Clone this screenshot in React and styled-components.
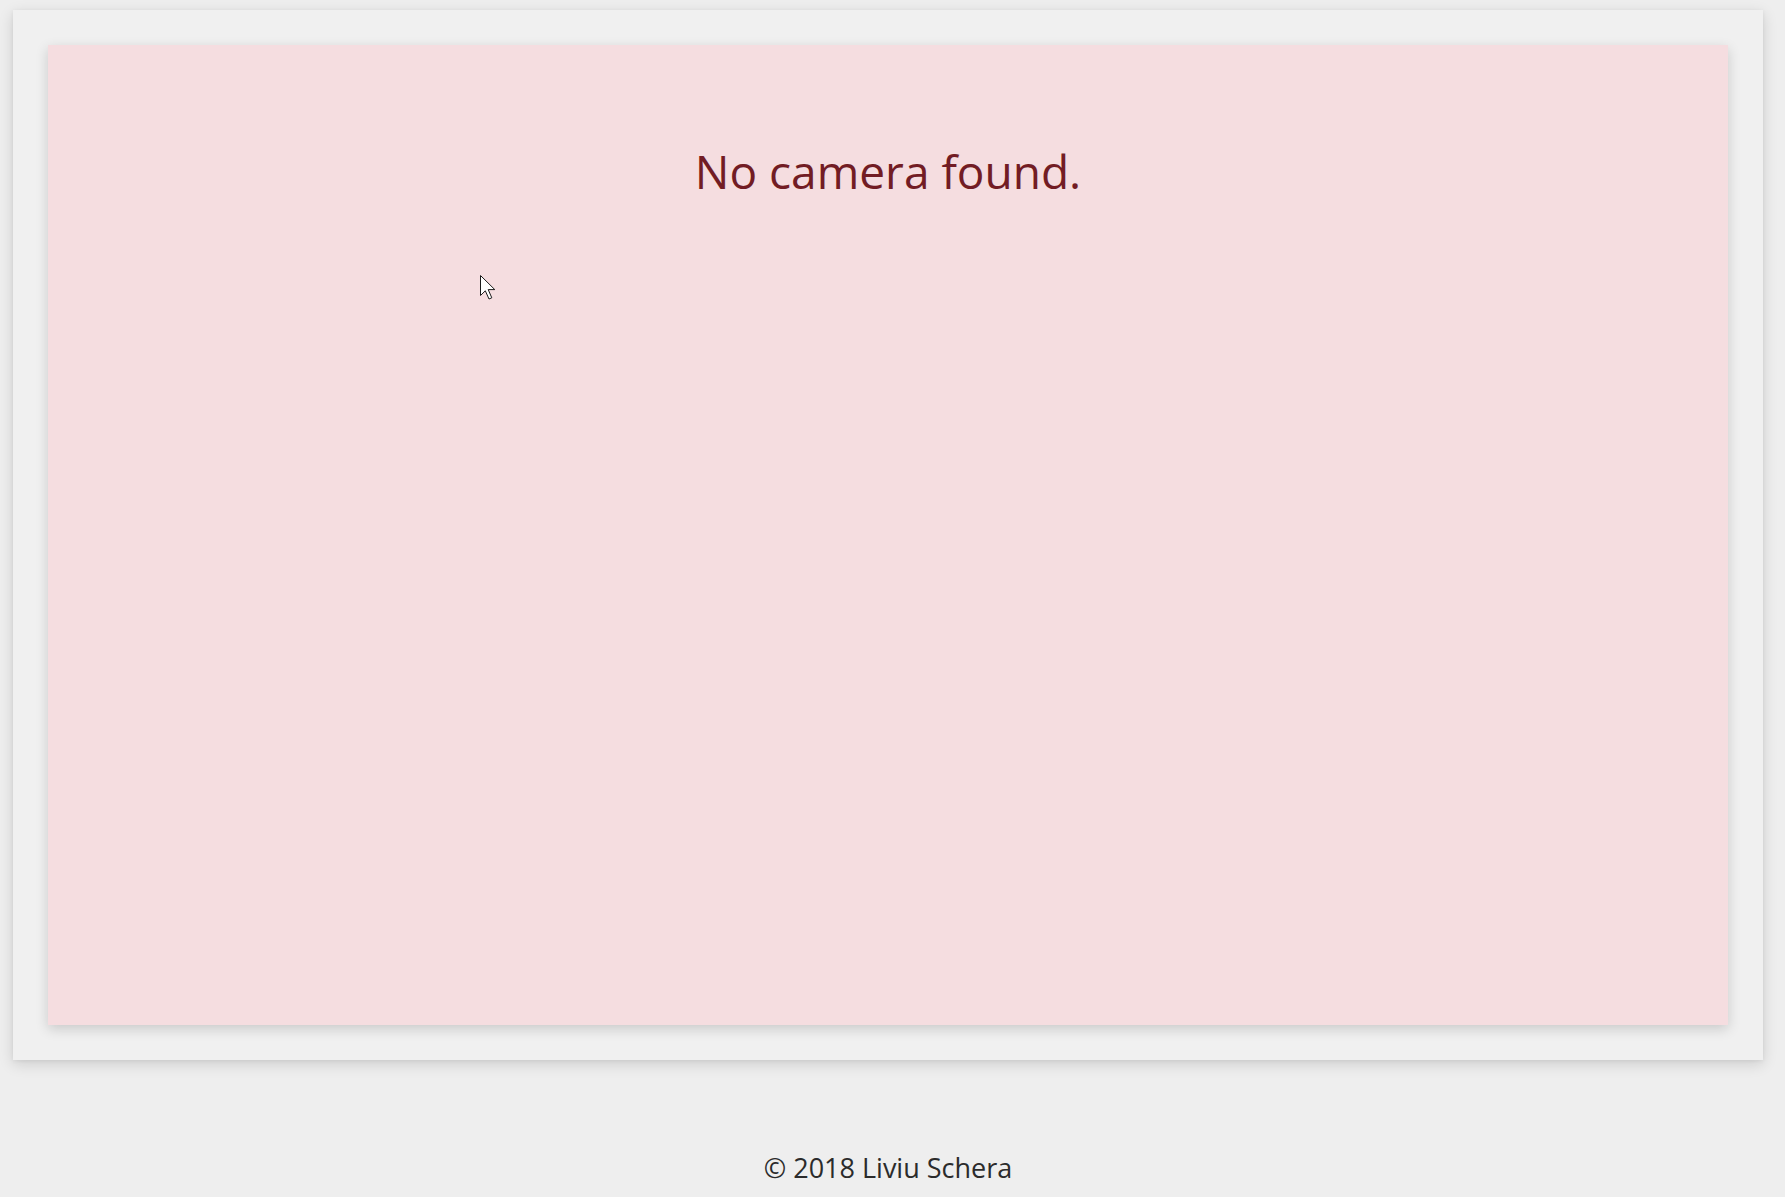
import React from "react";
import styled, { createGlobalStyle } from "styled-components";

const GlobalStyle = createGlobalStyle`
  html, body {
    margin: 0;
    padding: 0;
    background: #eeeeee;
    font-family: "Open Sans", "Noto Sans", sans-serif;
    overflow: hidden;
  }
`;

const Page = styled.div`
  position: relative;
  height: 1197px;
  padding: 10px 22px 0 13px;
  box-sizing: border-box;
`;

const Card = styled.div`
  background: #f0f0f0;
  padding: 35px;
  box-shadow: 0 4px 14px rgba(0, 0, 0, 0.14), 0 1px 4px rgba(0, 0, 0, 0.06);
`;

const Alert = styled.div`
  background: #f5dde0;
  height: 980px;
  box-sizing: border-box;
  padding-top: 103px;
  text-align: center;
  box-shadow: 0 4px 12px rgba(0, 0, 0, 0.16);
`;

const Message = styled.div`
  color: #721c24;
  font-size: 46px;
  line-height: 1;
`;

const Footer = styled.footer`
  text-align: center;
  color: #2b2b2b;
  font-size: 27px;
  line-height: 36px;
  padding-top: 90px;
`;

const Cursor = styled.svg`
  position: absolute;
  left: 479px;
  top: 274px;
`;

const App = () => {
  return (
    <>
      <GlobalStyle />
      <Page>
        <Card>
          <Alert>
            <Message>No camera found.</Message>
          </Alert>
        </Card>
        <Footer>© 2018 Liviu Schera</Footer>
        <Cursor width="18" height="27" viewBox="0 0 18 27">
          <path
            d="M1.5 1.5 L1.5 21.5 L6.3 16.8 L10 25 L12.8 23.8 L9.2 15.6 L15.8 15.6 Z"
            fill="#fff"
            stroke="#1a1a1a"
            strokeWidth="1"
            strokeLinejoin="miter"
          />
        </Cursor>
      </Page>
    </>
  );
};

export default App;
